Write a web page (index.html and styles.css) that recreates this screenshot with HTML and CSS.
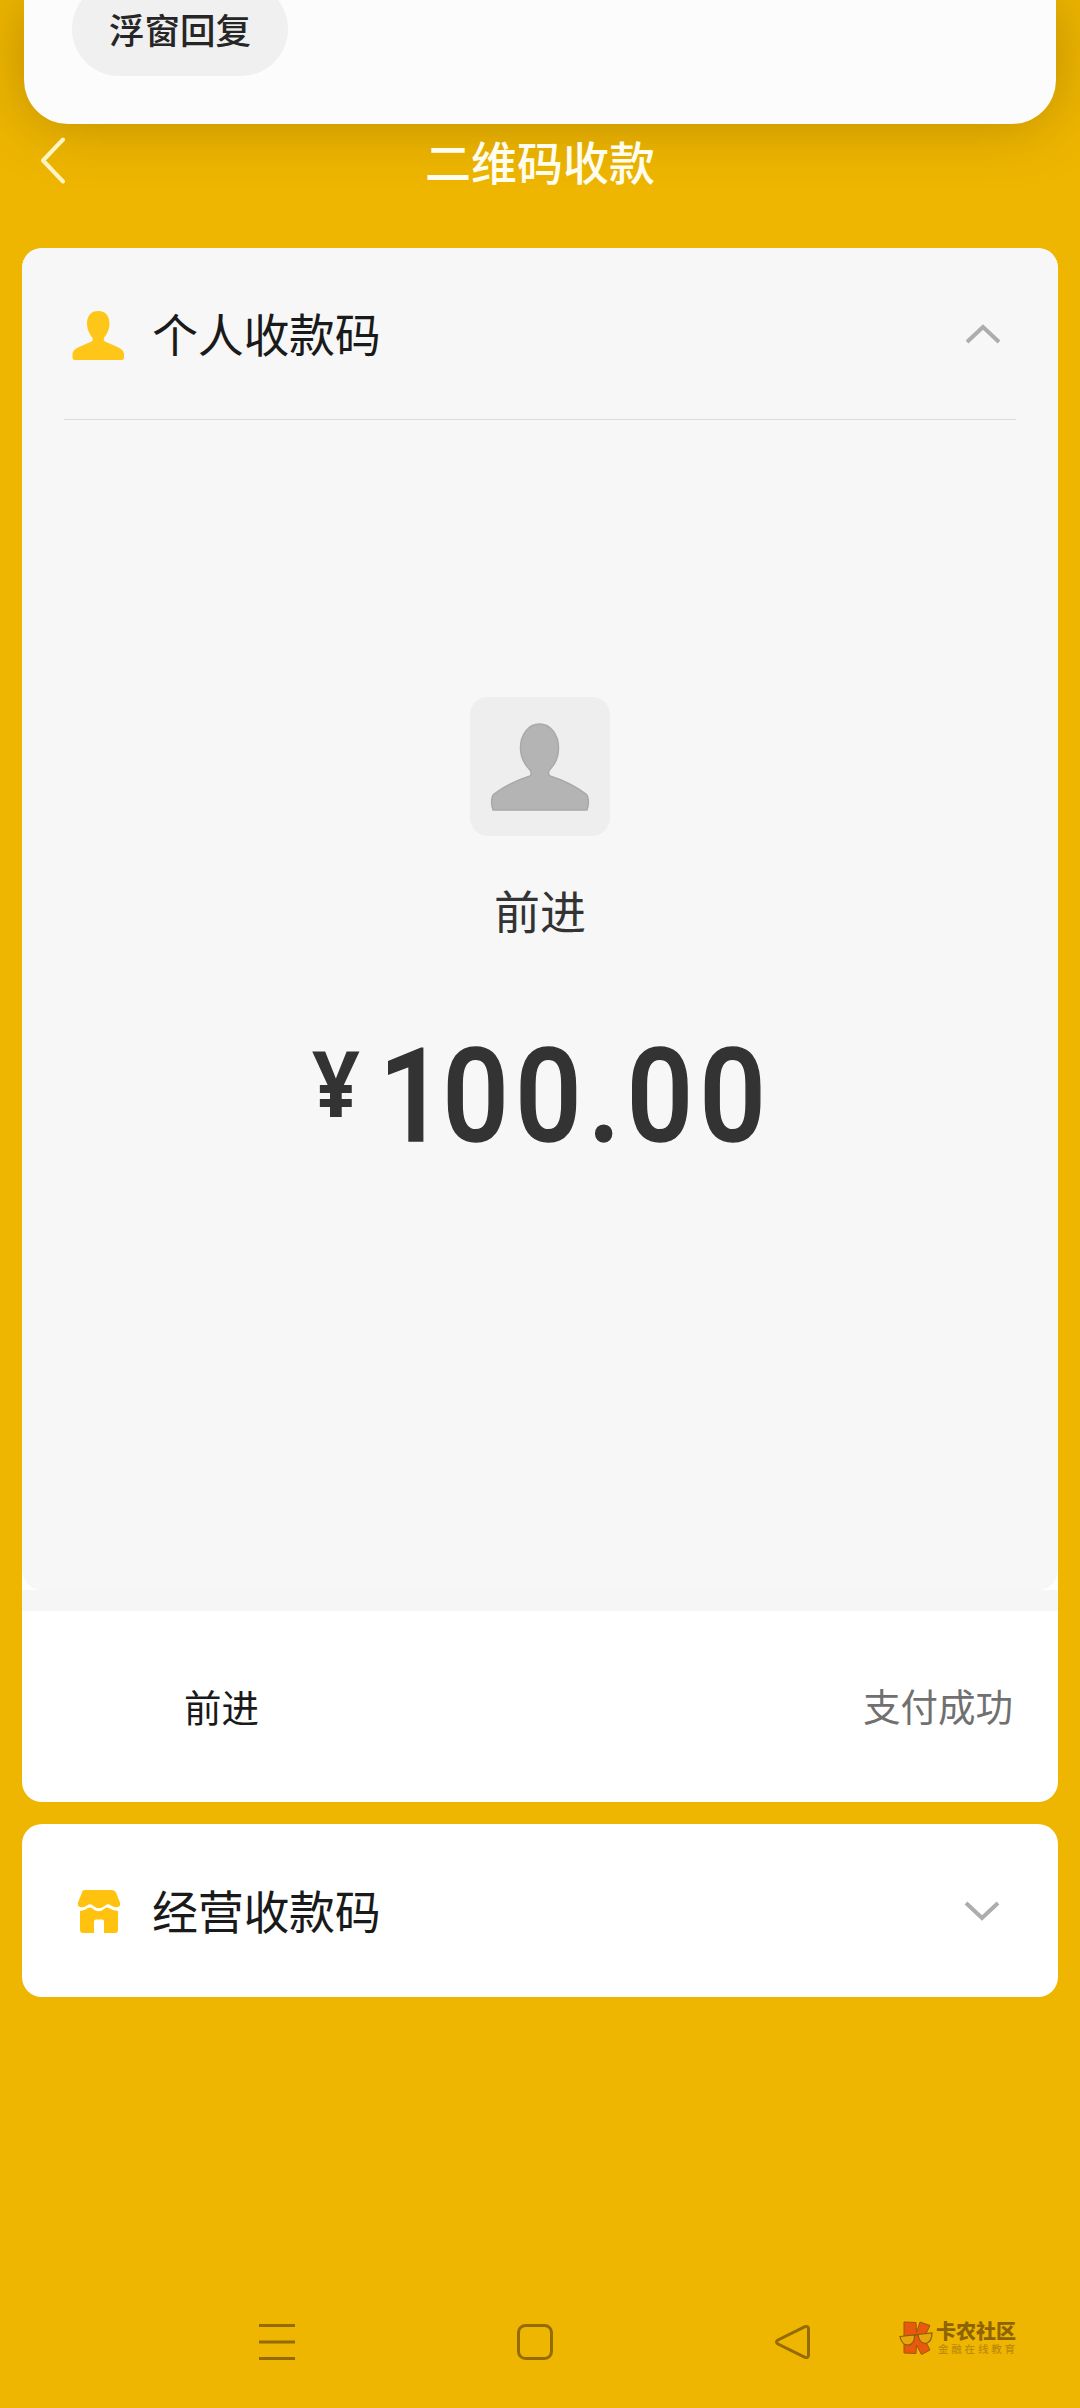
FILE: index.html
```html
<!DOCTYPE html>
<html lang="zh-CN">
<head>
<meta charset="utf-8">
<title>二维码收款</title>
<link rel="stylesheet" href="styles.css">
</head>
<body>
<div class="screen">
  <div class="popup"><button class="pill">浮窗回复</button></div>
  <header class="header">
    <svg class="back" width="24" height="48" viewBox="0 0 24 48"><path d="M22 2.500 2 23.500l20 21"/></svg>
    <h1 class="title">二维码收款</h1>
  </header>
  <main class="cards">
    <section class="card">
      <div class="panel">
        <div class="row row-main">
          <svg class="icon" width="56" height="56" viewBox="0 0 56 56"><path fill="#ffc61a" d="M28.300 5C35 5 39.500 9.500 39.500 17.500c0 6-2.800 11-5.300 14-.8 1.500-.6 3.300.8 4L47.500 41c4 2 6.500 4 6.500 7.500v3q0 2.500-2.500 2.500H5q-2.500 0-2.500-2.500v-3c0-3.500 2.500-5.500 6.500-7.500l12.500-5.500c1.400-.7 1.600-2.500.8-4-2.500-3-5.300-8-5.300-14C17 9.500 21.500 5 28.300 5z"/></svg>
          <span class="label">个人收款码</span>
          <svg class="chev" width="38" height="22" viewBox="0 0 38 22"><path d="M3 19 19 4l16 15"/></svg>
        </div>
        <div class="payer">
          <div class="avatar">
            <svg width="100" height="88" viewBox="0 0 100 88"><path fill="#b4b4b4" stroke="#a9a9a9" stroke-width="1.500" d="M49.500 1C61 1 68.500 12 68.500 25c0 9-4 17-9 22-1.500 2-1 5 .5 6 13 4 25 10 36 18 3 3 3 11 1 16H3c-2-5-2-13 1-16 11-8 23-14 36-18 1.500-1 1.500-4 0-6-5-5-9.500-13-9.500-22C30.500 12 38 1 49.500 1z"/></svg>
          </div>
          <div class="name">前进</div>
          <div class="amount"><span class="yen">¥</span><span class="num"><span class="one">1</span>00.00</span></div>
        </div>
      </div>
      <div class="strip"></div>
      <div class="result"><span class="result-name">前进</span><span class="result-state">支付成功</span></div>
    </section>
    <section class="card row row-shop">
      <svg class="icon" width="56" height="56" viewBox="0 0 56 56"><path fill="#ffc30f" d="M15 7h27q3 0 4 2.500l4 10q1 3.500-2 4.500-4 1-7-1.500-3.500-2.500-6.500.5-5.500 4.500-11 0-3-3-6.500-.5-3 2.500-7 1.500-3-1-2-4.500l4-10Q12 7 15 7zM10 28q4 0 8-3 3-1.500 5 1 5.500 4.500 11 0 2-2.500 5-1 4 3 9 3v19q0 3-3 3H34V38.500q0-2-2-2h-6q-2 0-2 2V50H13q-3 0-3-3z"/></svg>
      <span class="label">经营收款码</span>
      <svg class="chev" width="38" height="22" viewBox="0 0 38 22"><path d="M3 3l16 15L35 3"/></svg>
    </section>
  </main>
  <footer class="nav">
    <svg width="36" height="36" viewBox="0 0 36 36"><path d="M0 1.500h36M0 18h36M0 34.500h36"/></svg>
    <svg width="36" height="36" viewBox="0 0 36 36"><rect x="1.500" y="1.500" width="33" height="33" rx="7"/></svg>
    <svg width="36" height="36" viewBox="0 0 36 36"><path d="M30 2.700 3 16q-3 2 0 4l27 13.300q3.500 1.200 3.500-2.300V5q0-3.500-3.500-2.300z"/></svg>
    <div class="brand">
      <svg class="brand-logo" width="34" height="36" viewBox="0 0 34 36"><path d="M5 2l12 .5.500 10L21 2l10 3.500L25 18l6 12-8.500 4.500L17.500 25l-.5 8.500L5 33z" fill="#e9580c" stroke="#9c5a05"/><path d="M1 16.500l14.500-1.500q.5 9-6.500 10-6.500 0-8-8.500zM19 14.500L33 13q0 9-6.500 10.500Q20 23 19 14.500z" fill="#e9a50c" stroke="#86600c" stroke-width="1.200"/><path d="M15.500 15.500q2-1.500 3.500-.5" stroke="#86600c" stroke-width="1.200"/></svg>
      <div class="brand-text"><b>卡农社区</b><small>金融在线教育</small></div>
    </div>
  </footer>
</div>
</body>
</html>
```
FILE: styles.css
```css
* { box-sizing: border-box; }
body {
  margin: 0;
  background: #eeb600;
  font-family: "Noto Sans CJK SC", sans-serif;
  color: #1a1a1a;
}
.screen {
  width: 1080px;
  height: 2408px;
  overflow: hidden;
  display: flex;
  flex-direction: column;
}
.popup {
  flex: none;
  height: 124px;
  margin: 0 24px;
  padding-left: 48px;
  background: #fcfcfc;
  border-radius: 0 0 44px 44px;
  box-shadow: 0 0 60px rgba(90, 60, 0, .34);
}
.pill {
  display: block;
  width: 216px;
  height: 94px;
  margin-top: -18px;
  padding: 0;
  border: 0;
  border-radius: 47px;
  background: #f0f0f0;
  color: #262626;
  font: 500 35.500px/94px "Noto Sans CJK SC", sans-serif;
}
.header {
  flex: none;
  height: 124px;
  display: grid;
  grid-template-columns: 41px 1fr 41px;
  align-items: start;
}
.back { grid-column: 2; grid-row: 1; margin-top: 13px; fill: none; stroke: #fff4c4; stroke-width: 4; stroke-linecap: round; stroke-linejoin: round; }
.title { grid-column: 2; grid-row: 1; margin: 0; text-align: center; color: #fffdf0; font-size: 46px; font-weight: 500; line-height: 72px; }
.cards { display: flex; flex-direction: column; gap: 22px; margin: 0 22px; }
.card { background: #fff; border-radius: 20px; overflow: hidden; }
.panel { height: 1342px; padding: 0 42px; border-radius: 20px; background: #f7f7f7; }
.strip { height: 21px; background: #f6f6f6; }
.row { display: flex; align-items: center; }
.row-main { height: 172px; border-bottom: 1px solid #dcdcdc; padding: 0 14px 0 6px; }
.row-shop { height: 173px; padding: 0 57px 0 48px; }
.icon { flex: none; }
.label { margin: 0 0 3px 26px; font-size: 46px; line-height: 68px; letter-spacing: -.3px; }
.chev { margin-left: auto; fill: none; stroke: #adadad; stroke-width: 4; }
.payer { display: flex; flex-direction: column; align-items: center; padding-top: 277px; color: #333; }
.avatar { width: 140px; height: 139px; padding: 26px 20px 0; border-radius: 18px; background: #eee; }
.name { margin-top: 39px; font-size: 46px; line-height: 68px; }
.amount { display: flex; align-items: flex-start; width: 459px; margin-top: 68px; white-space: nowrap; }
.yen {
  flex: none;
  width: 67px;
  margin-left: 1px;
  font: 700 91px/142px "Noto Sans", sans-serif;
  transform: scaleX(.92);
  transform-origin: 0 0;
}
.num {
  flex: none;
  font: 500 129.500px/172px Roboto, sans-serif;
  letter-spacing: 7.200px;
  -webkit-text-stroke: 1.500px #333;
  transform: scaleX(.9);
  transform-origin: 0 0;
}
.one { letter-spacing: -3px; }
.result { display: flex; align-items: center; justify-content: space-between; height: 191px; padding: 0 45px 3px 162px; font-size: 37.500px; }
.result-state { color: #707070; margin-top: -2px; }
.nav { display: flex; margin-top: 327px; padding-left: 259px; }
.nav > svg { flex: none; margin-right: 222px; fill: none; stroke: #936b00; stroke-width: 3; }
.nav > svg:nth-of-type(3) { margin-right: 88px; }
.brand { display: flex; margin-top: -4px; }
.brand-logo { fill: none; }
.brand-text { display: flex; flex-direction: column; margin: 1px 0 0 3px; color: #8d6304; white-space: nowrap; font-family: "Liberation Sans", "Noto Sans CJK SC", sans-serif; }
.brand-text b { font-size: 20px; font-weight: 900; line-height: 22px; }
.brand-text small { color: #bd8b08; font-size: 10.500px; font-weight: 500; letter-spacing: 2.800px; line-height: 12px; margin-left: 2px; }
```
